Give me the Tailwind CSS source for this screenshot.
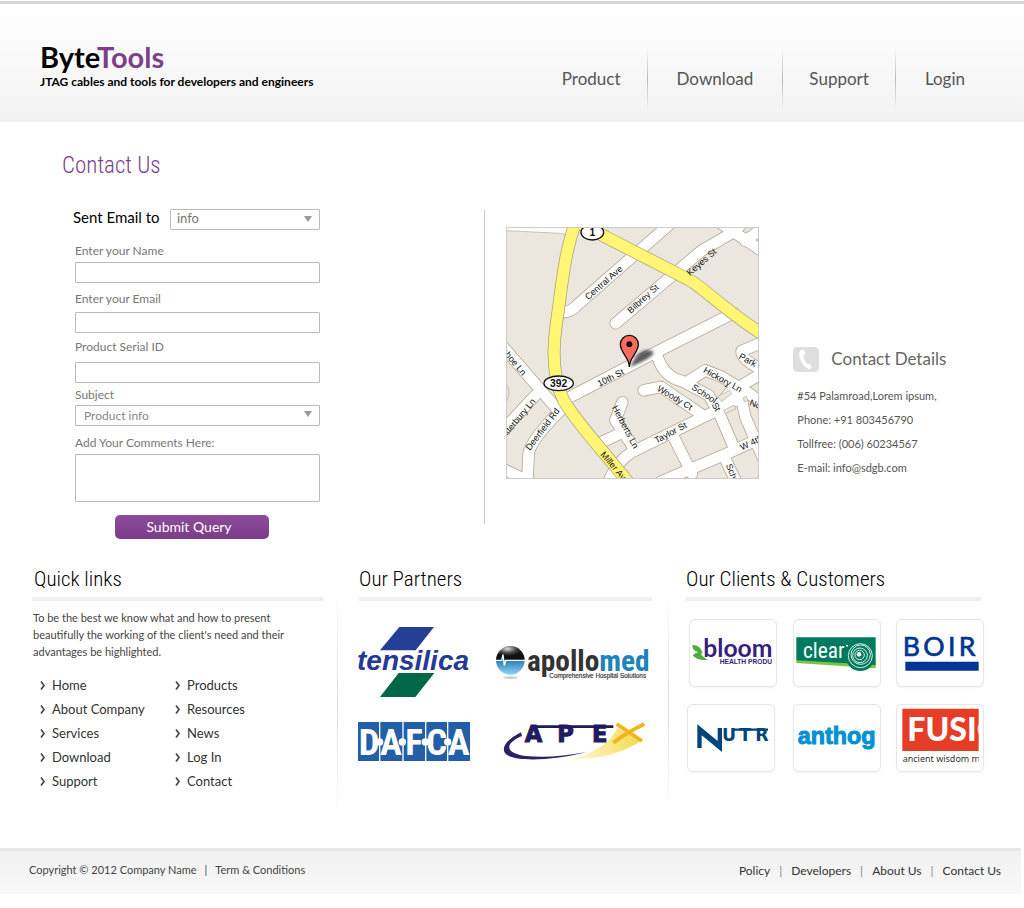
<!DOCTYPE html>
<html lang="en">
<head>
    <meta charset="UTF-8">
    <meta name="viewport" content="width=device-width, initial-scale=1.0">
    <title>ByteTools - Contact Us</title>
    <script src="https://cdn.jsdelivr.net/npm/@tailwindcss/browser@4"></script>
</head>
<body class="bg-white font-['Lato',sans-serif] text-[#444]">

    <!-- HEADER -->
    <header class="mt-px flex h-[121px] items-start justify-between border-t-3 border-[#d6d8d7] bg-linear-to-b from-white to-[#f2f2f2] pl-10 pr-[30px]">
        <div class="pt-[35px] text-black">
            <a href="#" class="block text-[29px] leading-9 font-bold">Byte<span class="text-[#7d3f8c]">Tools</span></a>
            <p class="text-xs leading-[14px] font-bold">JTAG cables and tools for developers and engineers</p>
        </div>
        <nav class="flex items-center pt-[43px] text-[17px] text-[#555]">
            <a href="#" class="px-[26px]">Product</a>
            <span class="h-16 w-px bg-linear-to-b from-transparent via-[#bbb] to-transparent"></span>
            <a href="#" class="px-[29px]">Download</a>
            <span class="h-16 w-px bg-linear-to-b from-transparent via-[#bbb] to-transparent"></span>
            <a href="#" class="px-[26px]">Support</a>
            <span class="h-16 w-px bg-linear-to-b from-transparent via-[#bbb] to-transparent"></span>
            <a href="#" class="px-[29px]">Login</a>
        </nav>
    </header>

    <main>
        <h1 class="pt-7 pl-[62px] font-['Roboto_Condensed',Roboto,sans-serif] text-[23px] leading-8 font-light text-[#7d3f8c]">Contact Us</h1>

        <section class="mt-7 flex">
            <!-- contact form -->
            <div class="w-[47.3%] pl-[75px]">
                <form class="-mt-px flex w-[245px] flex-col text-xs leading-4 text-[#777]">
                    <div class="flex h-[21px] items-start justify-between">
                        <label for="to" class="-ml-0.5 text-[15px] leading-4 text-black">Sent Email to</label>
                        <div class="relative">
                            <select id="to" class="block h-[21px] w-[150px] appearance-none rounded-[1px] border border-[#bbb] bg-white px-1.5 pb-[3px] text-[13px] leading-4"><option>info</option></select>
                            <svg class="pointer-events-none absolute top-[7px] right-2" width="8" height="6"><path d="M0 0h8L4 6z" fill="#999"/></svg>
                        </div>
                    </div>

                    <label for="name" class="mt-[13px]">Enter your Name</label>
                    <input id="name" type="text" class="mt-[3px] h-[21px] rounded-[1px] border border-[#bbb] px-2">

                    <label for="email" class="mt-2">Enter your Email</label>
                    <input id="email" type="text" class="mt-[5px] h-[21px] rounded-[1px] border border-[#bbb] px-2">

                    <label for="serial" class="mt-1.5">Product Serial ID</label>
                    <input id="serial" type="text" class="mt-[7px] h-[21px] rounded-[1px] border border-[#bbb] px-2">

                    <label for="subject" class="mt-1">Subject</label>
                    <div class="relative mt-0.5">
                        <select id="subject" class="block h-[21px] w-full appearance-none rounded-[1px] border border-[#bbb] bg-white px-2 text-xs text-[#888]"><option>Product info</option></select>
                        <svg class="pointer-events-none absolute top-1.5 right-2" width="8" height="6"><path d="M0 0h8L4 6z" fill="#999"/></svg>
                    </div>

                    <label for="comments" class="mt-[9px]">Add Your Comments Here:</label>
                    <textarea id="comments" class="mt-[3px] h-12 resize-none rounded-[1px] border border-[#bbb] px-2"></textarea>

                    <button type="submit" class="mt-[13px] ml-10 h-6 w-[154px] rounded-[5px] bg-linear-to-b from-[#8c4c99] to-[#7b3c88] pr-1.5 text-sm text-white">Submit Query</button>
                </form>
            </div>
            <div class="h-[314px] w-px bg-[#c8c8c8]"></div>

            <!-- map -->
            <div class="pt-[17px] pl-[21px]">
                <svg class="border border-[#ccc]" width="253" height="252" viewBox="20 23 753 750" font-family="Liberation Sans, Arial, sans-serif" font-size="27" fill="#111" text-anchor="middle">
                    <defs>
                        <filter id="soft"><feGaussianBlur stdDeviation="5"/></filter>
                        <g id="streets" fill="none" stroke-linecap="round" stroke-linejoin="round">
                            <path d="M510 10L235 250Q210 280 175 276"/>
                            <path d="M346 309L605 90L695 38L725 10"/>
                            <path d="M655 5L705 38L800 102M735 62L800 12"/>
                            <path d="M190 540L455 402L700 278"/>
                            <path d="M470 405Q490 470 545 482L625 525L655 575L700 680M672 710L710 790"/>
                            <path d="M560 485L615 450L665 470L740 515L800 560"/>
                            <path d="M320 800Q340 730 395 695L640 575L690 515L800 450"/>
                            <path d="M430 510L482 500L600 580"/>
                            <path d="M366 546L345 600L405 690M290 672L365 637"/>
                            <path d="M480 785L680 700L800 645M520 650L575 760"/>
                            <path d="M720 520L735 590L800 740M650 565L720 535"/>
                            <path d="M0 370L165 560"/>
                            <path d="M190 560Q90 660 85 700L80 800M105 525L0 638M0 742L90 785"/>
                            <path d="M800 360L724 392Q720 420 800 455"/>
                        </g>
                    </defs>
                    <path d="M0 0H800V800H0z" fill="#ebe6de"/>
                    <path d="M0 0H220L200 48Q195 40 180 39L0 30z" fill="#fff" stroke="#b7ab9a" stroke-width="2"/>
                    <use href="#streets" stroke="#b7ab9a" stroke-width="37"/>
                    <use href="#streets" stroke="#fff" stroke-width="32"/>
                    <g fill="#ebe6de" stroke="#b7ab9a" stroke-width="2">
                        <path d="M670 570l32-16 4 12-32 14z"/>
                        <path d="M728 532l10-4 5 12-10 5z"/>
                        <path d="M652 528l36-18 6 10-30 24z"/>
                        <path d="M18 490q16 26 0 55z"/>
                    </g>
                    <g fill="none">
                        <path d="M228 0C190 100 185 200 168 310C155 400 160 480 190 540C230 610 300 680 395 800" stroke="#b5a885" stroke-width="39"/>
                        <path d="M225 0L320 52L560 175C610 200 670 270 800 350" stroke="#b5a885" stroke-width="39"/>
                        <path d="M225 0L320 52L560 175C610 200 670 270 800 350" stroke="#fff774" stroke-width="34"/>
                        <path d="M228 0C190 100 185 200 168 310C155 400 160 480 190 540C230 610 300 680 395 800" stroke="#fff774" stroke-width="34"/>
                    </g>
                    <text transform="translate(316 194) rotate(-41)">Central Ave</text>
                    <text transform="translate(434 242) rotate(-42)">Bilbrey St</text>
                    <text transform="translate(610 132) rotate(-41)">Keyes St</text>
                    <text transform="translate(335 480) rotate(-27)">10th St</text>
                    <text transform="translate(738 427) rotate(28)">Park</text>
                    <text transform="translate(663 486) rotate(29)">Hickory Ln</text>
                    <text transform="translate(607 528) rotate(33)">School</text>
                    <text transform="translate(640 564) rotate(60)">St</text>
                    <text transform="translate(519 540) rotate(31)">Woody Ct</text>
                    <text transform="translate(367 624) rotate(62)">Herberts Ln</text>
                    <text transform="translate(515 645) rotate(-28)">Taylor St</text>
                    <text transform="translate(757 675) rotate(-26)">W 4th</text>
                    <text transform="translate(762 560) rotate(20)">No</text>
                    <text transform="translate(685 756) rotate(68)">Sch</text>
                    <text transform="translate(332 742) rotate(50)">Miller Av</text>
                    <text transform="translate(30 425) rotate(50)">Tahoe Ln</text>
                    <text transform="translate(60 600) rotate(-50)">Atterbury Ln</text>
                    <text transform="translate(134 632) rotate(-53)">Deerfield Rd</text>
                    <g stroke="#111" stroke-width="4">
                        <ellipse cx="276" cy="36" rx="34" ry="23" fill="#fff"/>
                        <ellipse cx="175" cy="489" rx="44" ry="22" fill="#fff"/>
                    </g>
                    <g font-size="31" font-weight="bold">
                        <text x="276" y="47">1</text>
                        <text x="175" y="500">392</text>
                    </g>
                    <!-- pin -->
                    <path d="M390 440Q405 400 435 390Q465 388 458 402Q445 418 390 440z" fill="#333" opacity=".8" filter="url(#soft)"/>
                    <path d="M387 440C387 410 360 398 360 372A27 27 0 0 1 414 372C414 398 387 410 387 440z" fill="#ff6a5e" stroke="#111" stroke-width="4"/>
                    <circle cx="387" cy="372" r="9" fill="#111"/>
                </svg>
            </div>

            <!-- contact details -->
            <address class="pt-[136px] pl-[34px] text-[11px] leading-6 text-[#555] not-italic">
                <h2 class="flex items-center gap-3 text-[17px] leading-[26px] text-[#666]">
                    <svg width="26" height="25" viewBox="0 0 78 75"><rect width="78" height="75" rx="13" fill="#dedede"/><path d="M22 10l10-3 6 14-7 4q2 16 11 26l8-1 7 13-9 3Q36 64 25 46 14 22 22 10z" fill="#fff"/></svg>
                    Contact Details
                </h2>
                <div class="mt-3 pl-1">
                    <p>#54 Palamroad,Lorem ipsum,</p>
                    <p>Phone: +91 803456790</p>
                    <p>Tollfree: (006) 60234567</p>
                    <p>E-mail: info@sdgb.com</p>
                </div>
            </address>
        </section>

        <!-- three columns above the footer -->
        <section class="mt-6 grid grid-cols-[337fr_1px_330fr_1px_355fr] pb-8">
            <div class="pr-3.5 pl-8">
                <h2 class="border-b-4 border-[#efefef] pb-0.5 pl-0.5 font-['Roboto_Condensed',Roboto,sans-serif] text-[21px] leading-8 font-light text-black">Quick links</h2>
                <p class="mt-2 pl-px text-[11px] leading-[17px]">To be the best we know what and how to present<br>beautifully the working of the client's need and their<br>advantages be highlighted.</p>
                <svg class="hidden"><symbol id="chevron" viewBox="0 0 6 9"><path d="M1 .5L4 4.500L1 8.500" fill="none" stroke="#444" stroke-width="1.600"/></symbol></svg>
                <div class="mt-[13px] grid grid-cols-[135px_1fr] pl-2 text-[13px] leading-6 text-[#333]">
                    <ul>
                        <li class="flex items-center gap-1.5"><svg width="6" height="9"><use href="#chevron"/></svg><a href="#">Home</a></li>
                        <li class="flex items-center gap-1.5"><svg width="6" height="9"><use href="#chevron"/></svg><a href="#">About Company</a></li>
                        <li class="flex items-center gap-1.5"><svg width="6" height="9"><use href="#chevron"/></svg><a href="#">Services</a></li>
                        <li class="flex items-center gap-1.5"><svg width="6" height="9"><use href="#chevron"/></svg><a href="#">Download</a></li>
                        <li class="flex items-center gap-1.5"><svg width="6" height="9"><use href="#chevron"/></svg><a href="#">Support</a></li>
                    </ul>
                    <ul>
                        <li class="flex items-center gap-1.5"><svg width="6" height="9"><use href="#chevron"/></svg><a href="#">Products</a></li>
                        <li class="flex items-center gap-1.5"><svg width="6" height="9"><use href="#chevron"/></svg><a href="#">Resources</a></li>
                        <li class="flex items-center gap-1.5"><svg width="6" height="9"><use href="#chevron"/></svg><a href="#">News</a></li>
                        <li class="flex items-center gap-1.5"><svg width="6" height="9"><use href="#chevron"/></svg><a href="#">Log In</a></li>
                        <li class="flex items-center gap-1.5"><svg width="6" height="9"><use href="#chevron"/></svg><a href="#">Contact</a></li>
                    </ul>
                </div>
            </div>

            <div class="mt-7 h-[225px] bg-linear-to-b from-transparent via-[#dcdcdc] to-transparent"></div>

            <div class="pr-4 pl-[21px]">
                <h2 class="border-b-4 border-[#efefef] pb-0.5 font-['Roboto_Condensed',Roboto,sans-serif] text-[21px] leading-8 font-light text-black">Our Partners</h2>
                <div class="-ml-0.5 flex items-center justify-between pt-[26px] pr-0.5">
                    <!-- tensilica -->
                    <svg width="112" height="70" viewBox="50 201 336 210">
                        <path d="M177 201H281L226 271H119z" fill="#263f96"/>
                        <path d="M175 339H282L225 411H119z" fill="#006747"/>
                        <text x="50" y="331" font-family="Liberation Sans, sans-serif" font-size="84" font-weight="bold" font-style="italic" fill="#263a94" stroke="#fff" stroke-width="6" paint-order="stroke">tensilica</text>
                    </svg>
                    <!-- apollomed -->
                    <svg width="155" height="36" viewBox="466 252 465 108">
                        <defs>
                            <radialGradient id="dark" cx=".4" cy=".2"><stop offset="0" stop-color="#ddd"/><stop offset=".6" stop-color="#444"/><stop offset="1" stop-color="#111"/></radialGradient>
                            <linearGradient id="sky" x2="0" y2="1"><stop offset="0" stop-color="#2b7fb5"/><stop offset="1" stop-color="#8fd4f5"/></linearGradient>
                        </defs>
                        <path d="M469 301A43 43 0 0 1 555 301z" fill="url(#dark)"/>
                        <path d="M469 301A43 43 0 0 0 555 301z" fill="url(#sky)"/>
                        <path d="M467 301H486L490 284L494 316L498 301H557" fill="none" stroke="#fff" stroke-width="4"/>
                        <ellipse cx="513" cy="353" rx="22" ry="4" fill="#ccc"/>
                        <text x="562" y="332" font-family="Roboto Condensed, Roboto, sans-serif" font-size="88" font-weight="bold" fill="#333">apollo<tspan fill="#1c83bd">med</tspan></text>
                        <text x="629" y="355" font-family="Liberation Sans, sans-serif" font-size="19" fill="#333" stroke="#333" stroke-width=".5">Comprehensive Hospital Solutions</text>
                    </svg>
                </div>
                <div class="-ml-px flex items-center justify-between pt-[25px] pr-1.5">
                    <!-- dafca -->
                    <svg width="112" height="39" viewBox="54 486 336 117">
                        <path d="M54 486H390V603H54z" fill="#235fa8"/>
                        <path d="M119 486V603M189 486V603M257 486V603M323 486V603" stroke="#fff" stroke-width="4"/>
                        <g fill="#fff"><circle cx="119" cy="546" r="11"/><circle cx="187" cy="546" r="11"/><circle cx="256" cy="546" r="11"/><circle cx="323" cy="546" r="11"/></g>
                        <text y="586" font-family="Roboto Condensed, Roboto, sans-serif" font-size="110" font-weight="bold" fill="#fff" text-anchor="middle"><tspan x="87">D</tspan><tspan x="153">A</tspan><tspan x="222">F</tspan><tspan x="290">C</tspan><tspan x="356">A</tspan></text>
                    </svg>
                    <!-- apex -->
                    <svg width="144" height="39" viewBox="488 488 432 117">
                        <defs><linearGradient id="tail" x1="1" x2="0"><stop offset="0" stop-color="#f5d94a"/><stop offset="1" stop-color="#fffbe0"/></linearGradient></defs>
                        <path d="M905 545Q820 600 690 600Q800 575 835 505z" fill="url(#tail)"/>
                        <path d="M545 519Q485 550 495 578C510 610 640 605 740 578Q640 598 560 590C490 580 500 550 548 530z" fill="#2a2268"/>
                        <path d="M832 494L908 545M915 494Q870 515 822 550" fill="none" stroke="#f0b41c" stroke-width="11"/>
                        <path d="M580 502H822" stroke="#1f1a62" stroke-width="8"/>
                        <text y="547" font-family="DejaVu Sans, sans-serif" font-size="68" font-weight="bold" fill="#1f1a62" stroke="#1f1a62" stroke-width="3"><tspan x="556">A</tspan><tspan x="654">P</tspan><tspan x="758">E</tspan></text>
                    </svg>
                </div>
            </div>

            <div class="mt-7 h-[225px] bg-linear-to-b from-transparent via-[#dcdcdc] to-transparent"></div>

            <div class="pr-[43px] pl-[17px]">
                <h2 class="border-b-4 border-[#efefef] pb-0.5 font-['Roboto_Condensed',Roboto,sans-serif] text-[21px] leading-8 font-light text-black">Our Clients &amp; Customers</h2>
                <div class="-mr-[3px] grid grid-cols-[88px_88px_88px] justify-between gap-y-[17px] pt-[18px] pl-[3px]">
                    <div class="h-[68px] overflow-hidden rounded-md border border-[#e6e6e6] shadow-xs">
                        <svg width="86" height="66" viewBox="62 183 258 198" font-family="Liberation Sans, sans-serif" font-weight="bold" fill="#36207f">
                            <path d="M69 258Q95 258 100 285L88 280Q68 275 69 258zM70 288Q92 270 98 290L115 303Q80 305 70 288z" fill="#4cae3c"/>
                            <text x="102" y="294" font-family="Lato, sans-serif" font-size="74">bloom</text>
                            <text x="151" y="315" font-size="20">HEALTH PRODU</text>
                        </svg>
                    </div>
                    <div class="h-[68px] overflow-hidden rounded-md border border-[#e6e6e6] shadow-xs">
                        <svg width="86" height="66" viewBox="377 183 258 198">
                            <path d="M384 302L622 314V328L384 312z" fill="#7dc242"/>
                            <path d="M384 235H622V318L384 304z" fill="#007a5e"/>
                            <circle cx="576" cy="292" r="44" fill="#007a5e"/>
                            <g fill="none" stroke="#d8eee6" stroke-width="3"><circle cx="576" cy="290" r="36"/><circle cx="577" cy="287" r="29"/><circle cx="575" cy="289" r="22"/><circle cx="574" cy="288" r="14"/></g>
                            <circle cx="572" cy="286" r="7" fill="#fff"/>
                            <text x="404" y="297" font-family="Roboto Condensed, Roboto, sans-serif" font-size="64" fill="#fff">clear</text>
                            <circle cx="536" cy="260" r="3" fill="#fff"/>
                        </svg>
                    </div>
                    <div class="h-[68px] overflow-hidden rounded-md border border-[#e6e6e6] shadow-xs">
                        <svg width="86" height="66" viewBox="683 183 258 198" font-family="Lato, sans-serif" font-size="80" fill="#003594" stroke="#003594" stroke-width="2">
                            <text y="290"><tspan x="700">B</tspan><tspan x="762">O</tspan><tspan x="836">I</tspan><tspan x="868">R</tspan></text>
                            <path d="M708 308H928V335H708z" stroke="none"/>
                        </svg>
                    </div>
                    <div class="-ml-0.5 h-[68px] w-[88px] overflow-hidden rounded-md border border-[#e6e6e6] shadow-xs">
                        <svg width="86" height="66" viewBox="56 437 258 198" fill="#00457c">
                            <path d="M84 495L145 545V506H158V578L97 528V566H84z"/>
                            <path d="M190 511H296" stroke="#00457c" stroke-width="7"/>
                            <text y="544" font-family="DejaVu Sans, sans-serif" font-weight="bold" font-size="52"><tspan x="158">U</tspan><tspan x="210">T</tspan><tspan x="258">R</tspan></text>
                        </svg>
                    </div>
                    <div class="h-[68px] overflow-hidden rounded-md border border-[#e6e6e6] shadow-xs">
                        <svg width="86" height="66" viewBox="377 437 258 198">
                            <text x="388" y="555" font-family="Liberation Sans, sans-serif" font-size="70" font-weight="bold" fill="#0091d4" stroke="#0091d4" stroke-width="3">anthog</text>
                        </svg>
                    </div>
                    <div class="h-[68px] overflow-hidden rounded-md border border-[#e6e6e6] shadow-xs">
                        <svg width="86" height="66" viewBox="683 437 258 198">
                            <path d="M699 448H928V575H699z" fill="#e63d27"/>
                            <svg x="683" y="437" width="245" height="198" viewBox="683 437 245 198">
                                <text x="714" y="546" font-family="Lato, sans-serif" font-size="96" font-weight="900" fill="#fff">FUSIO</text>
                                <text x="700" y="608" font-family="Noto Sans, sans-serif" font-size="27" fill="#333">ancient wisdom m</text>
                            </svg>
                        </svg>
                    </div>
                </div>
            </div>
        </section>
    </main>

    <!-- FOOTER -->
    <footer class="mr-[3px] flex h-[46px] items-center justify-between border-t-3 border-[#e8e8e8] bg-linear-to-b from-[#f1f1f1] to-[#f8f8f8] pr-5 pb-1 pl-[29px]">
        <p class="flex gap-2 text-[11px]"><span>Copyright © 2012 Company Name</span><span>|</span><a href="#">Term &amp; Conditions</a></p>
        <nav class="flex gap-[9px] text-xs text-[#333]">
            <a href="#">Policy</a><span class="text-[#888]">|</span>
            <a href="#">Developers</a><span class="text-[#888]">|</span>
            <a href="#">About Us</a><span class="text-[#888]">|</span>
            <a href="#">Contact Us</a>
        </nav>
    </footer>
</body>
</html>
